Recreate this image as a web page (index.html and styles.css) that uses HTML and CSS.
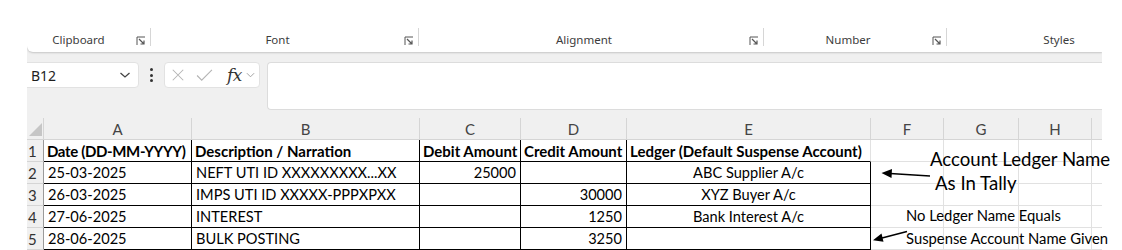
FILE: index.html
```html
<!DOCTYPE html>
<html>
<head>
<meta charset="utf-8">
<link rel="stylesheet" href="styles.css">
</head>
<body>
<div class="app">
  <div class="ribbon">
    <div class="group g-clip"><span class="glabel">Clipboard</span><svg class="launch" viewBox="0 0 10 10"><path d="M1 9V1h8" fill="none" stroke="#555" stroke-width="1"/><path d="M3 3l5 5M8 4.5V8H4.5" fill="none" stroke="#555" stroke-width="1.2"/></svg></div>
    <div class="gsep"></div>
    <div class="group g-font"><span class="glabel">Font</span><svg class="launch" viewBox="0 0 10 10"><path d="M1 9V1h8" fill="none" stroke="#555" stroke-width="1"/><path d="M3 3l5 5M8 4.5V8H4.5" fill="none" stroke="#555" stroke-width="1.2"/></svg></div>
    <div class="gsep"></div>
    <div class="group g-align"><span class="glabel">Alignment</span><svg class="launch" viewBox="0 0 10 10"><path d="M1 9V1h8" fill="none" stroke="#555" stroke-width="1"/><path d="M3 3l5 5M8 4.5V8H4.5" fill="none" stroke="#555" stroke-width="1.2"/></svg></div>
    <div class="gsep"></div>
    <div class="group g-num"><span class="glabel">Number</span><svg class="launch" viewBox="0 0 10 10"><path d="M1 9V1h8" fill="none" stroke="#555" stroke-width="1"/><path d="M3 3l5 5M8 4.5V8H4.5" fill="none" stroke="#555" stroke-width="1.2"/></svg></div>
    <div class="gsep"></div>
    <div class="group g-styles"><span class="glabel">Styles</span></div>
  </div>

  <div class="fbar">
    <div class="namebox"><span class="nbtext">B12</span><svg class="chev" viewBox="0 0 12 8"><path d="M1.5 2l4.5 4 4.5-4" fill="none" stroke="#444" stroke-width="1.3"/></svg></div>
    <div class="vdots"><i></i><i></i><i></i></div>
    <div class="fbtns">
      <svg class="ic-x" viewBox="0 0 16 16"><path d="M2 2l12 12M14 2L2 14" stroke="#b4b4b4" stroke-width="1.2" fill="none"/></svg>
      <svg class="ic-ok" viewBox="0 0 18 14"><path d="M1 7l5 5L17 1" stroke="#b4b4b4" stroke-width="1.2" fill="none"/></svg>
      <span class="fx">fx</span>
      <svg class="ic-chev" viewBox="0 0 10 6"><path d="M1 1l4 4 4-4" fill="none" stroke="#999" stroke-width="1"/></svg>
    </div>
    <div class="finput"></div>
  </div>

  <div class="sheet">
    <div class="ch corner"><svg viewBox="0 0 14 14"><path d="M14 0V14H0Z" fill="#c6c6c6"/></svg></div>
    <div class="ch">A</div><div class="ch">B</div><div class="ch">C</div><div class="ch">D</div><div class="ch">E</div><div class="ch">F</div><div class="ch">G</div><div class="ch">H</div><div class="ch last"></div>

    <div class="rh">1</div>
    <div class="c bd hdr tight">Date (DD-MM-YYYY)</div>
    <div class="c bd hdr">Description / Narration</div>
    <div class="c bd hdr">Debit Amount</div>
    <div class="c bd hdr">Credit Amount</div>
    <div class="c bb hdr">Ledger (Default Suspense Account)</div>
    <div class="c"></div><div class="c"></div><div class="c"></div><div class="c end"></div>

    <div class="rh">2</div>
    <div class="c bd">25-03-2025</div>
    <div class="c bd">NEFT UTI ID XXXXXXXXX...XX</div>
    <div class="c bd num">25000</div>
    <div class="c bd num"></div>
    <div class="c bd mid">ABC Supplier A/c</div>
    <div class="c"></div><div class="c"></div><div class="c"></div><div class="c end"></div>

    <div class="rh">3</div>
    <div class="c bd">26-03-2025</div>
    <div class="c bd">IMPS UTI ID XXXXX-PPPXPXX</div>
    <div class="c bd num"></div>
    <div class="c bd num">30000</div>
    <div class="c bd mid">XYZ Buyer A/c</div>
    <div class="c"></div><div class="c"></div><div class="c"></div><div class="c end"></div>

    <div class="rh">4</div>
    <div class="c bd">27-06-2025</div>
    <div class="c bd">INTEREST</div>
    <div class="c bd num"></div>
    <div class="c bd num">1250</div>
    <div class="c bd mid">Bank Interest A/c</div>
    <div class="c"></div><div class="c"></div><div class="c"></div><div class="c end"></div>

    <div class="rh">5</div>
    <div class="c bd">28-06-2025</div>
    <div class="c bd">BULK POSTING</div>
    <div class="c bd num"></div>
    <div class="c bd num">3250</div>
    <div class="c bd mid"></div>
    <div class="c"></div><div class="c"></div><div class="c"></div><div class="c end"></div>
  </div>
</div>

<div class="note n1">Account Ledger Name</div>
<div class="note n2">As In Tally</div>
<div class="note n3">No Ledger Name Equals</div>
<div class="note n4">Suspense Account Name Given</div>
<svg class="arrows" viewBox="0 0 1122 250">
  <path d="M930 176L890 173.5" stroke="#000" stroke-width="1.6" fill="none"/>
  <path d="M881.5 173L892 169L891.5 178Z" fill="#000"/>
  <path d="M907 231.5L882 238" stroke="#000" stroke-width="1.6" fill="none"/>
  <path d="M873 240.3L881.5 233.5L883.5 241.8Z" fill="#000"/>
</svg>
</body>
</html>
```

FILE: styles.css
```css
* { box-sizing: border-box; }
html, body { margin: 0; padding: 0; }
body {
  width: 1122px;
  height: 250px;
  overflow: hidden;
  background: #fff;
  position: relative;
  font-family: Lato, "Noto Sans", sans-serif;
}
.app {
  margin-left: 27px;
  width: 1075px;
  overflow: hidden;
  background: #f0f0f0;
}

/* ribbon */
.ribbon {
  height: 52px;
  background: #fff;
  display: flex;
  align-items: flex-start;
  padding-top: 28px;
  box-shadow: 0 1px 2px rgba(0,0,0,0.18);
  border-radius: 0 0 0 6px;
  position: relative;
  z-index: 1;
  overflow: hidden;
}
.group {
  display: flex;
  align-items: flex-start;
  height: 18px;
  flex-shrink: 0;
}
.g-clip { width: 123px; }
.g-font { width: 267px; }
.g-align { width: 344px; }
.g-num { width: 182px; }
.g-styles { flex: 1 1 auto; min-width: 0; padding-left: 55px; }
.g-styles .glabel { flex: none; width: 114px; text-align: center; }
.glabel {
  flex: 1;
  text-align: center;
  font-family: "Noto Sans", sans-serif;
  font-size: 11.5px;
  line-height: 16px;
  padding-top: 4px;
  color: #3c3c3c;
}
.g-clip .glabel { padding-right: 6px; }
.launch {
  width: 10px;
  height: 10px;
  margin-top: 8px;
  margin-right: 4px;
  flex-shrink: 0;
}
.gsep {
  width: 1px;
  height: 18px;
  background: #d6d6d6;
  flex-shrink: 0;
}

/* formula bar */
.fbar {
  display: flex;
  align-items: flex-start;
  padding: 10px 0 8px;
  height: 66px;
  background: #f0f0f0;
}
.namebox {
  margin-left: -6px;
  width: 118px;
  height: 26px;
  background: #fff;
  border: 1px solid #e2e2e2;
  border-radius: 4px;
  display: flex;
  align-items: center;
  justify-content: space-between;
  padding: 0 7px 0 9px;
}
.nbtext {
  font-family: "Noto Sans", sans-serif;
  font-size: 14px;
  color: #1e1e1e;
}
.chev { width: 12px; height: 8px; }
.vdots {
  width: 25px;
  height: 26px;
  display: flex;
  flex-direction: column;
  align-items: center;
  justify-content: center;
  gap: 2.5px;
}
.vdots i {
  display: block;
  width: 3px;
  height: 3px;
  border-radius: 50%;
  background: #333;
}
.fbtns {
  width: 96px;
  height: 26px;
  background: #fff;
  border: 1px solid #e2e2e2;
  border-radius: 4px;
  display: flex;
  align-items: center;
  padding-left: 6px;
}
.ic-x { width: 14px; height: 14px; }
.ic-ok { width: 17px; height: 13px; margin-left: 11px; }
.fx {
  font-family: "DejaVu Serif", "Liberation Serif", serif;
  font-style: italic;
  font-size: 17px;
  color: #333;
  margin-left: 14px;
  letter-spacing: -0.5px;
}
.ic-chev { width: 9px; height: 6px; margin-left: 4px; }
.finput {
  flex: 1;
  margin-left: 7px;
  height: 48px;
  background: #fff;
  border: 1px solid #dcdcdc;
  border-radius: 4px 0 0 4px;
  border-right: none;
}

/* sheet */
.sheet {
  display: grid;
  grid-template-columns: 17px 148px 228px 101px 106px 244px 73px 75px 73px 1fr;
  grid-template-rows: 22px 22px 22px 22px 22px 22px;
  background: #fff;
  font-family: Lato, sans-serif;
  font-size: 14.6px;
  color: #000;
}
.ch {
  background: #f0f0f0;
  color: #444;
  font-size: 15px;
  text-align: center;
  line-height: 22px;
  border-right: 1px solid #d5d5d5;
  border-bottom: 1px solid #d5d5d5;
}
.ch.corner {
  display: flex;
  align-items: flex-end;
  justify-content: flex-end;
  padding: 0 1px 3px 0;
}
.ch.corner svg { width: 13px; height: 13px; }
.ch.last { border-right: none; }
.rh {
  background: #f0f0f0;
  color: #333;
  font-size: 15px;
  line-height: 22px;
  padding-left: 1px;
  border-right: 1px solid #9a9a9a;
  border-bottom: 1px solid #d5d5d5;
}
.c {
  border-right: 1px solid #e1e1e1;
  border-bottom: 1px solid #e1e1e1;
  line-height: 22px;
  padding: 0 4px;
  white-space: nowrap;
  overflow: visible;
}
.c.end { border-right: none; background: #fff; }
.c.bd { border-right-color: #000; border-bottom-color: #000; }
.c.bb { border-bottom-color: #000; }
.hdr { font-weight: 700; font-size: 15px; padding: 0 2px 0 3px; }
.hdr.tight { letter-spacing: -0.35px; }
.num { text-align: right; }
.mid { text-align: center; }

/* overlays */
.note {
  position: absolute;
  font-family: Lato, sans-serif;
  color: #000;
  white-space: nowrap;
  line-height: 1;
}
.n1 { left: 930px; top: 150px; font-size: 18.6px; }
.n2 { left: 935px; top: 174px; font-size: 18.6px; }
.n3 { left: 906px; top: 208px; font-size: 14.8px; }
.n4 { left: 906px; top: 231px; font-size: 14.8px; }
.arrows {
  position: absolute;
  left: 0;
  top: 0;
  width: 1122px;
  height: 250px;
  pointer-events: none;
}
```
